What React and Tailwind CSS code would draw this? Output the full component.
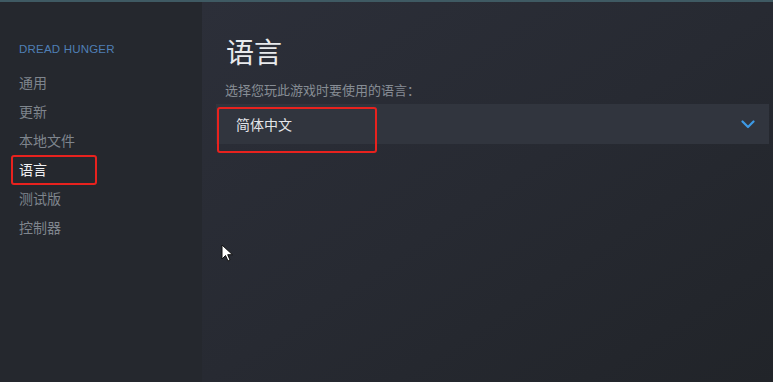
import React from "react";

const menu = ["通用", "更新", "本地文件", "语言", "测试版", "控制器"];

const App = () => {
  return (
    <div
      className="relative w-[773px] h-[382px] overflow-hidden flex flex-col bg-[#24272d]"
      style={{ fontFamily: '"Noto Sans", "Noto Sans CJK SC", sans-serif' }}
    >
      {/* thin teal line across the top of the window */}
      <div className="h-[2px] bg-[#3f5a63]" />
      <div className="flex flex-1">
        {/* Sidebar */}
        <div className="w-[202px] bg-[#25282e] pt-[39px] pl-[19px]">
          <div className="text-[11.5px] tracking-[0.2px] text-[#4f7fb5] leading-[16px] h-[16px] font-['Liberation_Sans']">
            DREAD HUNGER
          </div>
          <div className="mt-[11px] flex flex-col">
            {menu.map((item) => (
              <div
                key={item}
                className={`h-[29px] leading-[29px] text-[14px] ${
                  item === "语言" ? "text-[#f0f1f3]" : "text-[#7f858d]"
                }`}
              >
                {item}
              </div>
            ))}
          </div>
        </div>

        {/* Main */}
        <div className="flex-1 bg-gradient-to-br from-[#2c2f39] via-[#272a32] to-[#212429] pt-[31px] pl-[14px] pr-[4px]">
          <h1 className="pl-[10px] text-[28px] leading-[38px] text-[#e8eaed]">
            语言
          </h1>
          <p className="pl-[9px] mt-[10px] text-[13px] leading-[18px] text-[#878d95]">
            选择您玩此游戏时要使用的语言：
          </p>
          <div className="mt-[5px] h-[40px] bg-[#31353e] flex items-center justify-between pl-[20px] pr-[14px]">
            <span className="text-[14px] text-[#e4e6e9]">简体中文</span>
            <svg width="14" height="9" viewBox="0 0 14 9" fill="none">
              <path
                d="M1.5 1.5 L7 7 L12.5 1.5"
                stroke="#3d9ae6"
                strokeWidth="2.2"
                strokeLinecap="round"
                strokeLinejoin="round"
              />
            </svg>
          </div>
        </div>
      </div>

      {/* red highlight boxes */}
      <div className="absolute left-[11px] top-[155px] w-[86px] h-[30px] border-2 border-[#e8221e] rounded-[3px]" />
      <div className="absolute left-[217px] top-[107px] w-[160px] h-[46px] border-2 border-[#e8221e] rounded-[3px]" />

      {/* mouse cursor */}
      <svg
        className="absolute left-[221px] top-[244px]"
        width="13"
        height="19"
        viewBox="0 0 13 19"
      >
        <path
          d="M1 1 L1 15 L4.5 11.5 L7 17 L9 16 L6.7 10.7 L11.5 10.7 Z"
          fill="#ffffff"
          stroke="#111"
          strokeWidth="1"
          strokeLinejoin="round"
        />
      </svg>
    </div>
  );
};

export default App;
